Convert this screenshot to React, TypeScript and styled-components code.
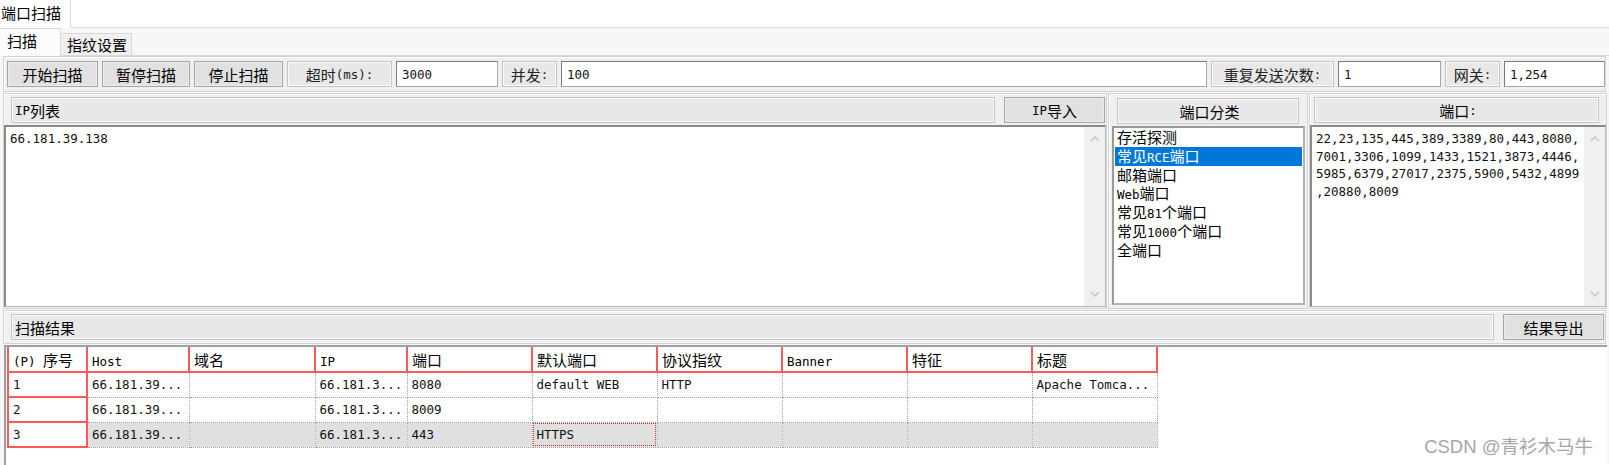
import styled, { createGlobalStyle } from "styled-components";

const MONO = `"DejaVu Sans Mono", "Liberation Mono", monospace`;
const CJK = `"Noto Sans CJK SC", "Noto Sans", sans-serif`;

const GlobalStyle = createGlobalStyle`
  * { box-sizing: border-box; }
  html, body { margin: 0; padding: 0; background: #f0f0f0; }
  body { font-family: ${CJK}; font-size: 15px; color: #000; }
`;

const Page = styled.div`
  width: 1609px;
  height: 465px;
  overflow: hidden;
  display: flex;
  flex-direction: column;
  background: #f0f0f0;
`;

const Latin = styled.span`
  font-family: ${MONO};
  font-size: 12.5px;
  white-space: pre;
`;

/* ---------- tabs ---------- */

const OuterTabBar = styled.div`
  height: 28px;
  flex: none;
  display: flex;
  background: #fff;
`;

const OuterTab = styled.div`
  width: 71px;
  padding-left: 1px;
  line-height: 26px;
  background: #fff;
  border-right: 1px solid #d9d9d9;
  white-space: nowrap;
`;

const TabFiller = styled.div`
  flex: 1;
  border-bottom: 1px solid #d9d9d9;
`;

const Content = styled.div`
  flex: 1;
  display: flex;
  flex-direction: column;
  background: #f7f7f7;
`;

const InnerTabBar = styled.div`
  height: 28px;
  flex: none;
  display: flex;
`;

const InnerTab = styled.div<{ $active?: boolean }>`
  width: ${(p) => (p.$active ? 61 : 71)}px;
  margin-top: ${(p) => (p.$active ? 0 : 5)}px;
  padding-left: ${(p) => (p.$active ? 7 : 6)}px;
  line-height: ${(p) => (p.$active ? 24 : 21)}px;
  background: ${(p) => (p.$active ? "#fcfcfc" : "#f0f0f0")};
  border-top: 1px solid #d9d9d9;
  border-right: 1px solid #d9d9d9;
  border-bottom: ${(p) => (p.$active ? "none" : "1px solid #d9d9d9")};
  white-space: nowrap;
`;

/* ---------- toolbar ---------- */

const Toolbar = styled.div`
  height: 36px;
  flex: none;
  margin: 0 3px;
  display: flex;
  align-items: center;
  gap: 4px;
  padding-left: 3px;
  background: #f0f0f0;
  border: 1px solid #d3d3d3;
  box-shadow: inset 1px 1px 0 #fff;
`;

const Button = styled.div<{ $w: number }>`
  width: ${(p) => p.$w}px;
  height: 26px;
  flex: none;
  display: flex;
  align-items: center;
  justify-content: center;
  background: #e1e1e1;
  border: 1px solid #a6a6a6;
  box-shadow: inset 0 0 0 1px #ececec;
  white-space: nowrap;
`;

const LabelBox = styled.div<{ $w: number }>`
  width: ${(p) => p.$w}px;
  height: 26px;
  flex: none;
  display: flex;
  align-items: center;
  justify-content: center;
  background: #e8e8e8;
  border: 1px solid #c4c4c4;
  box-shadow: inset 0 0 0 1px #fafafa;
  color: #222;
  white-space: nowrap;
`;

const Field = styled.div<{ $w?: number }>`
  ${(p) => (p.$w ? `width: ${p.$w}px; flex: none;` : "flex: 1;")}
  height: 26px;
  display: flex;
  align-items: center;
  padding: 0 5px;
  background: #fff;
  border: 1px solid #a8a8a8;
  border-top-color: #7a7a7a;
  border-left-color: #7a7a7a;
  font-family: ${MONO};
  font-size: 12.5px;
  color: #111;
`;

/* ---------- middle ---------- */

const MiddleRow = styled.div`
  height: 216px;
  flex: none;
  margin: 1px 3px 0 3px;
  display: flex;
  gap: 1px;
`;

const Panel = styled.div<{ $w: number }>`
  width: ${(p) => p.$w}px;
  flex: none;
  display: flex;
  flex-direction: column;
  background: #f0f0f0;
  border: 1px solid #d3d3d3;
  box-shadow: inset 1px 1px 0 #fff;
`;

const HeaderRow = styled.div<{ $pad: string }>`
  height: 31px;
  flex: none;
  display: flex;
  align-items: center;
  gap: 9px;
  padding: ${(p) => p.$pad};
`;

const TitleBar = styled.div<{ $center?: boolean }>`
  flex: 1;
  height: 26px;
  display: flex;
  align-items: center;
  justify-content: ${(p) => (p.$center ? "center" : "flex-start")};
  padding-left: 3px;
  background: #e8e8e8;
  border: 1px solid #c4c4c4;
  box-shadow: inset 0 0 0 1px #fbfbfb;
  white-space: nowrap;
`;

const TextArea = styled.div`
  flex: 1;
  display: flex;
  margin-bottom: 1px;
  background: #fff;
  border: 1px solid #b8b8b8;
  border-top: 2px solid #8a8a8a;
  border-left: 2px solid #8a8a8a;
`;

const TextBody = styled.div`
  flex: 1;
  padding: 3px 4px;
  font-family: ${MONO};
  font-size: 12.5px;
  line-height: 17.5px;
  color: #111;
  white-space: pre;
`;

const ScrollBar = styled.div`
  width: 21px;
  flex: none;
  display: flex;
  flex-direction: column;
  justify-content: space-between;
  background: #f0f0f0;
`;

const ArrowBox = styled.div`
  height: 24px;
  display: flex;
  align-items: center;
  justify-content: center;
`;

const ListBox = styled.div`
  flex: 1;
  margin: 1px 2px 3px 3px;
  padding: 0 1px;
  background: #fff;
  border: 2px solid #9a9a9a;
  border-right-color: #b4b4b4;
  border-bottom-color: #b4b4b4;
`;

const ListItem = styled.div<{ $selected?: boolean }>`
  height: 18.8px;
  line-height: 18.8px;
  padding-left: 2px;
  background: ${(p) => (p.$selected ? "#0078d7" : "transparent")};
  color: ${(p) => (p.$selected ? "#fff" : "#000")};
  white-space: nowrap;
`;

/* ---------- results ---------- */

const ResultRow = styled.div`
  height: 34px;
  flex: none;
  margin: 1px 3px 0 3px;
  display: flex;
  align-items: center;
  gap: 9px;
  padding: 0 1px 0 7px;
  background: #f0f0f0;
  border: 1px solid #d3d3d3;
  box-shadow: inset 1px 1px 0 #fff;
`;

const TablePanel = styled.div`
  flex: 1;
  position: relative;
  margin: 1px 2px 0 4px;
  padding-left: 1px;
  background: #fff;
  border-top: 2px solid #a0a0a0;
  border-left: 2px solid #a0a0a0;
`;

const Table = styled.table`
  border-collapse: collapse;
  table-layout: fixed;
  width: 1149px;
`;

const HeadCell = styled.th`
  height: 25px;
  padding: 0 4px;
  text-align: left;
  font-weight: normal;
  white-space: nowrap;
  overflow: hidden;
  background: #fff;
  border: 2px solid #ff5a5a;
  border-top: none;
`;

const Cell = styled.td<{ $index?: boolean; $shade?: boolean; $focus?: boolean }>`
  height: 25px;
  padding: 0 4px;
  white-space: nowrap;
  overflow: hidden;
  font-family: ${MONO};
  font-size: 12.5px;
  color: #111;
  background: ${(p) => (p.$shade && !p.$index ? "#e0e0e0" : "#fff")};
  border: ${(p) => (p.$index ? "2px solid #ff5a5a" : "1px dotted #9e9e9e")};
  ${(p) => (p.$focus ? "outline: 1px dotted #e23030; outline-offset: -2px;" : "")}
`;

const Watermark = styled.div`
  position: absolute;
  right: 14px;
  bottom: 7px;
  font-family: "Liberation Sans", ${CJK};
  font-size: 18.5px;
  line-height: 22px;
  color: #a6a6a6;
  white-space: nowrap;
`;

function Chevron({ up }: { up?: boolean }) {
  return (
    <svg width="10" height="6" viewBox="0 0 10 6">
      <path
        d={up ? "M1 5 L5 1 L9 5" : "M1 1 L5 5 L9 1"}
        fill="none"
        stroke="#c3c3c3"
        strokeWidth="1.3"
      />
    </svg>
  );
}

function Scroll() {
  return (
    <ScrollBar>
      <ArrowBox>
        <Chevron up />
      </ArrowBox>
      <ArrowBox>
        <Chevron />
      </ArrowBox>
    </ScrollBar>
  );
}

const categories = ["存活探测", "常见RCE端口", "邮箱端口", "Web端口", "常见81个端口", "常见1000个端口", "全端口"];

// split CJK / latin so latin bits use the mono face like the Swing app
const LATIN_RUN = /([A-Za-z0-9():,. ]+)/;
function Mixed({ text }: { text: string }) {
  const parts = text.split(LATIN_RUN).filter(Boolean);
  return (
    <>
      {parts.map((part, i) =>
        /^[A-Za-z0-9():,. ]+$/.test(part) ? <Latin key={i}>{part}</Latin> : <span key={i}>{part}</span>
      )}
    </>
  );
}

const portLines = [
  "22,23,135,445,389,3389,80,443,8080,",
  "7001,3306,1099,1433,1521,3873,4446,",
  "5985,6379,27017,2375,5900,5432,4899",
  ",20880,8009",
];

const columns = [
  { label: "(P) 序号", w: 79 },
  { label: "Host", w: 102 },
  { label: "域名", w: 126 },
  { label: "IP", w: 92 },
  { label: "端口", w: 125 },
  { label: "默认端口", w: 125 },
  { label: "协议指纹", w: 125 },
  { label: "Banner", w: 125 },
  { label: "特征", w: 125 },
  { label: "标题", w: 125 },
];

const rows = [
  ["1", "66.181.39...", "", "66.181.3...", "8080", "default WEB", "HTTP", "", "", "Apache Tomca..."],
  ["2", "66.181.39...", "", "66.181.3...", "8009", "", "", "", "", ""],
  ["3", "66.181.39...", "", "66.181.3...", "443", "HTTPS", "", "", "", ""],
];

export default function App() {
  return (
    <Page>
      <GlobalStyle />
      <OuterTabBar>
        <OuterTab>端口扫描</OuterTab>
        <TabFiller />
      </OuterTabBar>
      <Content>
        <InnerTabBar>
          <InnerTab $active>扫描</InnerTab>
          <InnerTab>指纹设置</InnerTab>
          <TabFiller />
        </InnerTabBar>

        <Toolbar>
          <Button $w={91}>开始扫描</Button>
          <Button $w={88}>暂停扫描</Button>
          <Button $w={89}>停止扫描</Button>
          <LabelBox $w={105}>
            <Mixed text="超时(ms):" />
          </LabelBox>
          <Field $w={102}>3000</Field>
          <LabelBox $w={55}>
            <Mixed text="并发:" />
          </LabelBox>
          <Field $w={646}>100</Field>
          <LabelBox $w={123}>
            <Mixed text="重复发送次数:" />
          </LabelBox>
          <Field $w={103}>1</Field>
          <LabelBox $w={55}>
            <Mixed text="网关:" />
          </LabelBox>
          <Field>1,254</Field>
        </Toolbar>

        <MiddleRow>
          <Panel $w={1104}>
            <HeaderRow $pad="3px 1px 2px 7px">
              <TitleBar>
                <Mixed text="IP列表" />
              </TitleBar>
              <Button $w={101}>
                <Mixed text="IP导入" />
              </Button>
            </HeaderRow>
            <TextArea>
              <TextBody>66.181.39.138</TextBody>
              <Scroll />
            </TextArea>
          </Panel>

          <Panel $w={200}>
            <HeaderRow $pad="4px 8px 1px 8px">
              <TitleBar $center>端口分类</TitleBar>
            </HeaderRow>
            <ListBox>
              {categories.map((c, i) => (
                <ListItem key={c} $selected={i === 1}>
                  <Mixed text={c} />
                </ListItem>
              ))}
            </ListBox>
          </Panel>

          <Panel $w={298}>
            <HeaderRow $pad="3px 7px 2px 4px">
              <TitleBar $center>
                <Mixed text="端口:" />
              </TitleBar>
            </HeaderRow>
            <TextArea>
              <TextBody>{portLines.join("\n")}</TextBody>
              <Scroll />
            </TextArea>
          </Panel>
        </MiddleRow>

        <ResultRow>
          <TitleBar>扫描结果</TitleBar>
          <Button $w={101}>结果导出</Button>
        </ResultRow>

        <TablePanel>
          <Table>
            <colgroup>
              {columns.map((c) => (
                <col key={c.label} style={{ width: c.w }} />
              ))}
            </colgroup>
            <thead>
              <tr>
                {columns.map((c) => (
                  <HeadCell key={c.label}>
                    <Mixed text={c.label} />
                  </HeadCell>
                ))}
              </tr>
            </thead>
            <tbody>
              {rows.map((r, ri) => (
                <tr key={ri}>
                  {r.map((v, ci) => (
                    <Cell key={ci} $index={ci === 0} $shade={ri === 2} $focus={ri === 2 && ci === 5}>
                      {v}
                    </Cell>
                  ))}
                </tr>
              ))}
            </tbody>
          </Table>
          <Watermark>CSDN @青衫木马牛</Watermark>
        </TablePanel>
      </Content>
    </Page>
  );
}
